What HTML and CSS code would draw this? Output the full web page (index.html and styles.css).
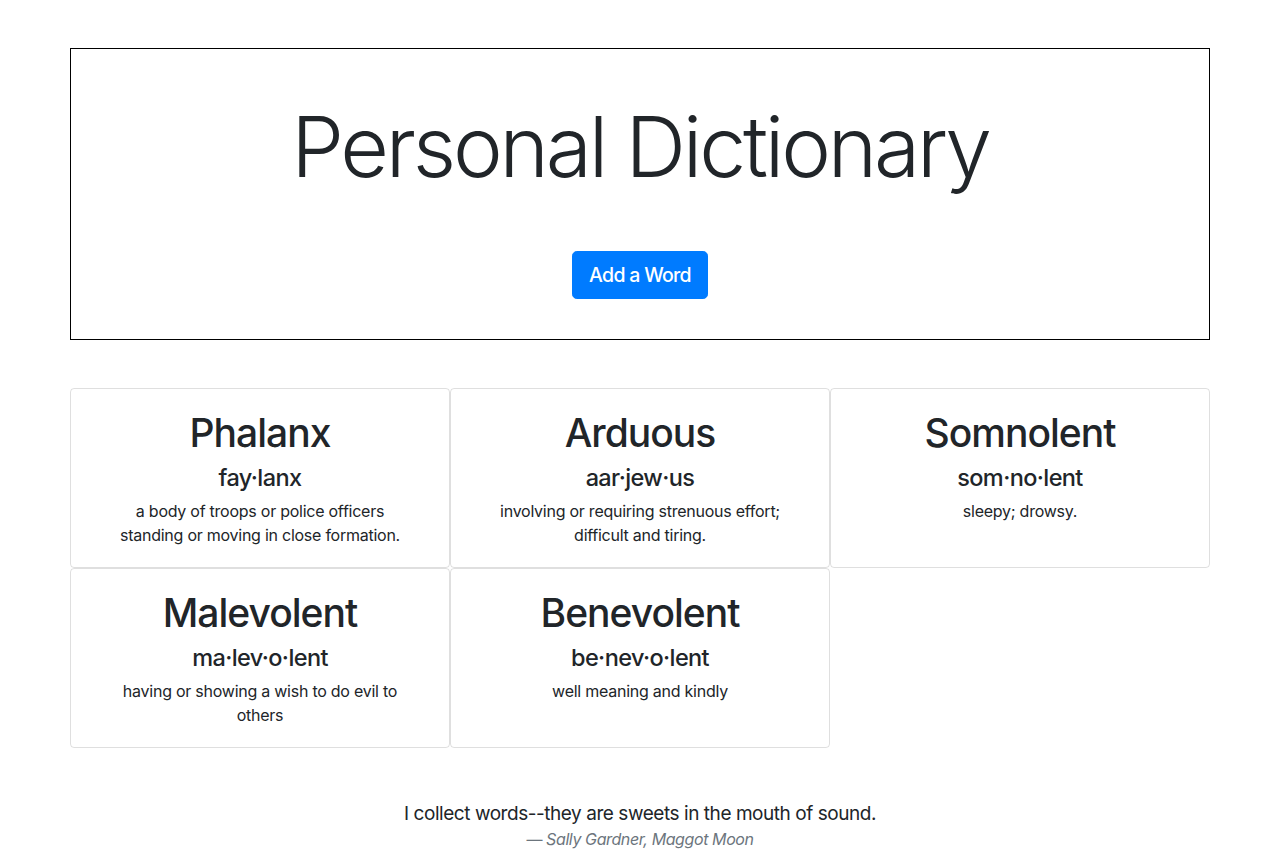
FILE: index.html
```html
<!DOCTYPE html>
<html lang="en">
<head>
<meta charset="utf-8">
<title>Personal Dictionary</title>
<link rel="stylesheet" href="styles.css">
</head>
<body>
<div class="container">
  <header class="jumbotron">
    <h1 class="display">Personal Dictionary</h1>
    <button class="btn-primary" type="button">Add a Word</button>
  </header>

  <section class="cards">
    <article class="card">
      <h2 class="word">Phalanx</h2>
      <h4 class="pron">fay·lanx</h4>
      <p class="def">a body of troops or police officers standing or moving in close formation.</p>
    </article>
    <article class="card">
      <h2 class="word">Arduous</h2>
      <h4 class="pron">aar·jew·us</h4>
      <p class="def">involving or requiring strenuous effort; difficult and tiring.</p>
    </article>
    <article class="card">
      <h2 class="word">Somnolent</h2>
      <h4 class="pron">som·no·lent</h4>
      <p class="def">sleepy; drowsy.</p>
    </article>
    <article class="card">
      <h2 class="word">Malevolent</h2>
      <h4 class="pron">ma·lev·o·lent</h4>
      <p class="def">having or showing a wish to do evil to others</p>
    </article>
    <article class="card">
      <h2 class="word">Benevolent</h2>
      <h4 class="pron">be·nev·o·lent</h4>
      <p class="def">well meaning and kindly</p>
    </article>
  </section>

  <blockquote class="quote">
    <p class="quote-text">I collect words--they are sweets in the mouth of sound.</p>
    <footer class="quote-footer">— <cite>Sally Gardner, Maggot Moon</cite></footer>
  </blockquote>
</div>
</body>
</html>
```

FILE: styles.css
```css
* {
  box-sizing: border-box;
}

body {
  margin: 0;
  font-family: Inter, "Noto Sans", "Liberation Sans", sans-serif;
  font-size: 16px;
  line-height: 1.5;
  color: #212529;
  background: #fff;
}

.container {
  width: 1140px;
  margin: 48px auto 0;
}

.jumbotron {
  border: 1px solid #000;
  height: 292px;
  padding: 48px 32px 0;
  display: flex;
  flex-direction: column;
  align-items: center;
}

.display {
  margin: 0 0 53px;
  font-size: 84px;
  font-weight: 300;
  line-height: 1.2;
  letter-spacing: -3.2px;
}

.btn-primary {
  font-family: inherit;
  font-size: 19.5px;
  line-height: 30px;
  height: 48px;
  padding: 8px 16px;
  border: 1px solid #007bff;
  border-radius: 4.8px;
  background: #007bff;
  color: #fff;
  font-weight: 500;
  letter-spacing: -0.7px;
  cursor: pointer;
}

.cards {
  margin-top: 48px;
  display: grid;
  grid-template-columns: repeat(3, 380px);
  grid-auto-rows: 180px;
}

.card {
  border: 1px solid rgba(0, 0, 0, 0.125);
  border-radius: 4px;
  padding: 20px;
  text-align: center;
}

.word {
  margin: 0 0 6px;
  font-size: 39px;
  font-weight: 500;
  line-height: 48px;
  letter-spacing: -1px;
}

.pron {
  margin: 0 0 7px;
  font-size: 23.5px;
  font-weight: 500;
  line-height: 29px;
  letter-spacing: -0.6px;
}

.def {
  margin: 0;
  padding: 0 16px;
  letter-spacing: -0.25px;
}

.quote {
  margin: 51px 0 16px;
  text-align: center;
}

.quote-text {
  margin: 0;
  font-size: 19px;
  line-height: 30px;
  letter-spacing: -0.45px;
}

.quote-footer {
  font-size: 16px;
  color: #6c757d;
  line-height: 24px;
  letter-spacing: -0.4px;
  margin-top: -2px;
}

.quote-footer cite {
  font-style: italic;
}
```
